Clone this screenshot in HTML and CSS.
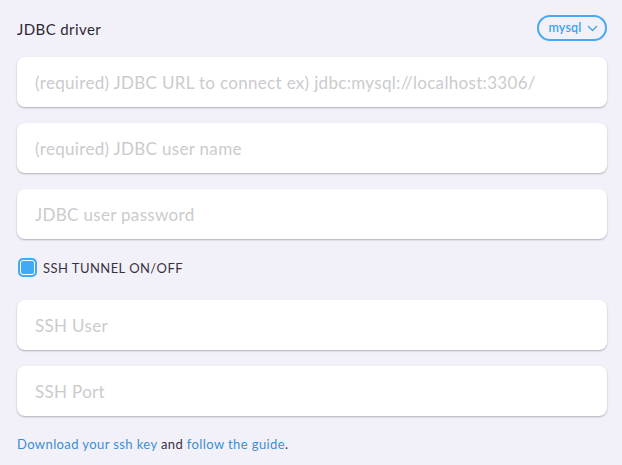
FILE: index.html
```html
<!DOCTYPE html>
<html>
<head>
<meta charset="utf-8">
<link rel="stylesheet" href="styles.css">
</head>
<body>
<div class="page">
  <div class="header">
    <span class="label">JDBC driver</span>
    <button class="pill">mysql <svg width="11" height="7" viewBox="0 0 11 7"><path d="M1 1 L5.5 5.5 L10 1" fill="none" stroke="#3aa4f0" stroke-width="1.3"/></svg></button>
  </div>
  <div class="fields">
    <input class="field" placeholder="(required) JDBC URL to connect ex) jdbc:mysql://localhost:3306/">
    <input class="field" placeholder="(required) JDBC user name">
    <input class="field" placeholder="JDBC user password">
  </div>
  <label class="check-row"><span class="check"></span><span class="check-text">SSH TUNNEL ON/OFF</span></label>
  <div class="fields ssh">
    <input class="field" placeholder="SSH User">
    <input class="field" placeholder="SSH Port">
  </div>
  <p class="footer"><a href="#">Download your ssh key</a> and <a href="#">follow the guide</a>.</p>
</div>
</body>
</html>
```
FILE: styles.css
```css
html, body { margin: 0; padding: 0; background: #f2f1fa; }
body { font-family: Lato, "Open Sans", sans-serif; color: #352c3a; }
.page { padding: 15px 15px 0 17px; }
.header { display: flex; justify-content: space-between; align-items: center; height: 26px; margin-bottom: 16px; }
.label { font-size: 15px; color: #2f2833; padding-top: 2px; letter-spacing: 0.4px; }
.pill { height: 26px; width: 70px; box-sizing: border-box; border: 2px solid #45aaf2; border-radius: 13px; background: transparent; color: #3aa4f0; font-family: Lato, sans-serif; font-size: 12.5px; font-weight: 600; display: flex; align-items: center; justify-content: center; gap: 5px; padding: 0 0 1px 2px; letter-spacing: 0.2px; }
.pill svg { margin-top: 1px; }
.fields { display: flex; flex-direction: column; gap: 16px; }
.field { display: block; box-sizing: border-box; height: 50px; width: 100%; border: none; border-radius: 8px; background: #fff; box-shadow: 0 1px 2px rgba(0,0,0,0.28); padding: 0 18px; font-family: Lato, sans-serif; font-size: 17px; letter-spacing: 0.32px; outline: none; }
.field::placeholder { color: #cbcbce; }
.check-row { display: flex; align-items: center; gap: 6px; margin-top: 19px; height: 19px; margin-left: 1px; }
.check { width: 19px; height: 19px; box-sizing: border-box; border-radius: 5px; background: #40aaf6; border: 2px solid #40aaf6; box-shadow: inset 0 0 0 1px #fff; }
.check-text { font-size: 13px; color: #3a3140; letter-spacing: 0.45px; }
.ssh { margin-top: 23px; }
.footer { margin: 20px 0 0 0; font-size: 13px; line-height: 16px; color: #3a3140; letter-spacing: 0.4px; }
.footer a { color: #3a8fd3; text-decoration: none; }
```
